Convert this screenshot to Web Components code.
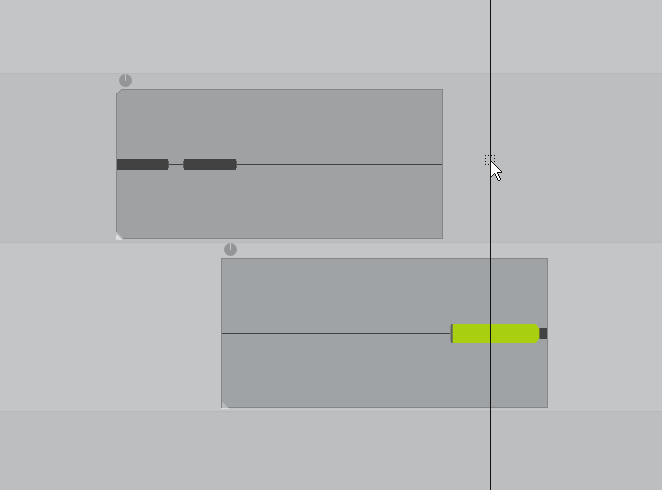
<!DOCTYPE html>
<html lang="en">
<head>
<meta charset="utf-8">
<title>Timeline</title>
<style>
html, body { margin: 0; height: 100%; overflow: hidden; }
body { font-family: "Liberation Sans", sans-serif; }
</style>
</head>
<body>
<time-line>
  <track-row class="lead"></track-row>
  <track-row shade="dark">
    <audio-clip style="--start:116px; --fill:#a0a1a2">
      <svg width="325" height="148" shape-rendering="crispEdges">
        <path d="M0 74h325v1H0z" fill="#424242"/>
        <path d="M0 69h51v11H0zM67 69h52v11H67z" fill="#424242"/>
        <path d="M51 71h1v7h-1zM66 71h1v7h-1zM119 71h1v7h-1z" fill="#5c5c5c"/>
      </svg>
      <svg slot="corner" width="8" height="8" shape-rendering="crispEdges"><path d="M0 0h1v1h1v1h1v1h1v1h1v1h1v1h1v2H0z" fill="#bdbebf"/><path d="M0 3h2v1h1v1h1v1h1v1h1v1H0z" fill="#dcdddf"/></svg>
      <svg slot="notch" width="8" height="8" shape-rendering="crispEdges"><path d="M0 0h6v1H5v1H4v1H3v1H2v1H0z" fill="#bdbebf"/><path d="M5 0h2v1H5zM4 1h1v1H4zM3 2h1v1H3zM2 3h1v1H2zM0 4h2v1H1v1H0z" fill="#858687"/></svg>
    </audio-clip>
  </track-row>
  <track-row>
    <audio-clip style="--start:221px; --fill:#9fa3a5">
      <svg width="325" height="148" shape-rendering="crispEdges">
        <path d="M0 74h229v1H0z" fill="#424242"/>
        <path d="M228 67h1v15h-1z" fill="#858a80"/>
        <path d="M229 65h1v19h-1z" fill="#5e6256"/>
        <path d="M230 65h1v19h-1z" fill="#77834f"/>
        <path d="M231 65h83v1h1v1h1v2h1v11h-1v2h-1v1h-1v1h-83z" fill="#a9cf11"/>
        <path d="M317 69h1v11h-1z" fill="#6b752f"/>
        <path d="M318 69h7v11h-7z" fill="#424242"/>
      </svg>
      <svg slot="corner" width="8" height="8" shape-rendering="crispEdges"><path d="M1 1l6 6H1z" fill="#b7b9ba"/><path d="M0 7h8v1H0z" fill="#dcdddf"/></svg>
    </audio-clip>
  </track-row>
  <track-row shade="dark" class="rest"></track-row>
  <play-head slot="overlay"></play-head>
  <mouse-pointer slot="overlay"></mouse-pointer>
</time-line>
<script>
function define(name, html) {
  const template = document.createElement('template');
  template.innerHTML = html;
  customElements.define(name, class extends HTMLElement {
    constructor() {
      super();
      this.attachShadow({ mode: 'open' }).append(template.content.cloneNode(true));
    }
  });
}

define('time-line', `
<style>
:host { display: flex; flex-direction: column; position: relative; height: 100%; overflow: hidden; }
::slotted(track-row) { flex: none; }
::slotted(.lead) { height: 73px; --edge: #c4c5c6; }
::slotted(.rest) { flex: 1; }
</style>
<slot></slot><slot name="overlay"></slot>`);

define('track-row', `
<style>
:host { display: flow-root; box-sizing: border-box; padding-bottom: 3px; background: #c4c5c6; border-top: 1px solid var(--edge, #b6b7b8); }
:host([shade="dark"]) { background: #bdbebf; }
</style>
<slot></slot>`);

define('audio-clip', `
<style>
:host { display: flex; flex-direction: column; align-items: flex-start; gap: 2px; margin-left: var(--start); }
.knob { display: block; margin-left: 3px; }
.body { position: relative; border: 1px solid #858687; background: var(--fill); }
::slotted(svg) { display: block; }
::slotted([slot="corner"]) { position: absolute; left: -1px; bottom: -2px; }
::slotted([slot="notch"]) { position: absolute; left: -1px; top: -1px; }
</style>
<svg class="knob" width="13" height="13"><circle cx="6.5" cy="6.5" r="6.5" fill="#949596"/><path d="M6 0h1v7H6z" fill="#c4c5c6"/></svg>
<div class="body"><slot></slot><slot name="corner"></slot><slot name="notch"></slot></div>`);

define('play-head', `
<style>:host { position: absolute; top: 0; bottom: 0; left: 490px; width: 1px; background: #111; }</style>`);

define('mouse-pointer', `
<style>:host { position: absolute; left: 485px; top: 155px; } svg { display: block; }</style>
<svg width="18" height="28" shape-rendering="crispEdges">
  <path d="M0 0h1v1H0zM3 0h1v1H3zM6 0h1v1H6zM9 0h1v1H9zM0 3h1v1H0zM9 3h1v1H9zM0 6h1v1H0zM9 6h1v1H9zM0 9h1v1H0zM3 9h1v1H3z" fill="#111"/>
  <g transform="translate(5 5)">
    <path d="M0 0h1v1h1v1h1v1h1v1h1v1h1v1h1v1h1v1h1v1h1v1h1v1h1v2H8v1h1v2h1v2h1v2h-1v1H8v-1H7v-2H6v-2H5v-2H4v1H3v1H2v1H0z" fill="#111"/>
    <path d="M1 2h1v1h1v1h1v1h1v1h1v1h1v1h1v1h1v1h1v1h1v1H7v2h1v2h1v2h1v2H8v-2H7v-2H6v-2H5v-1H4v1H3v1H2v1H1z" fill="#fff"/>
  </g>
</svg>`);
</script>
</body>
</html>
